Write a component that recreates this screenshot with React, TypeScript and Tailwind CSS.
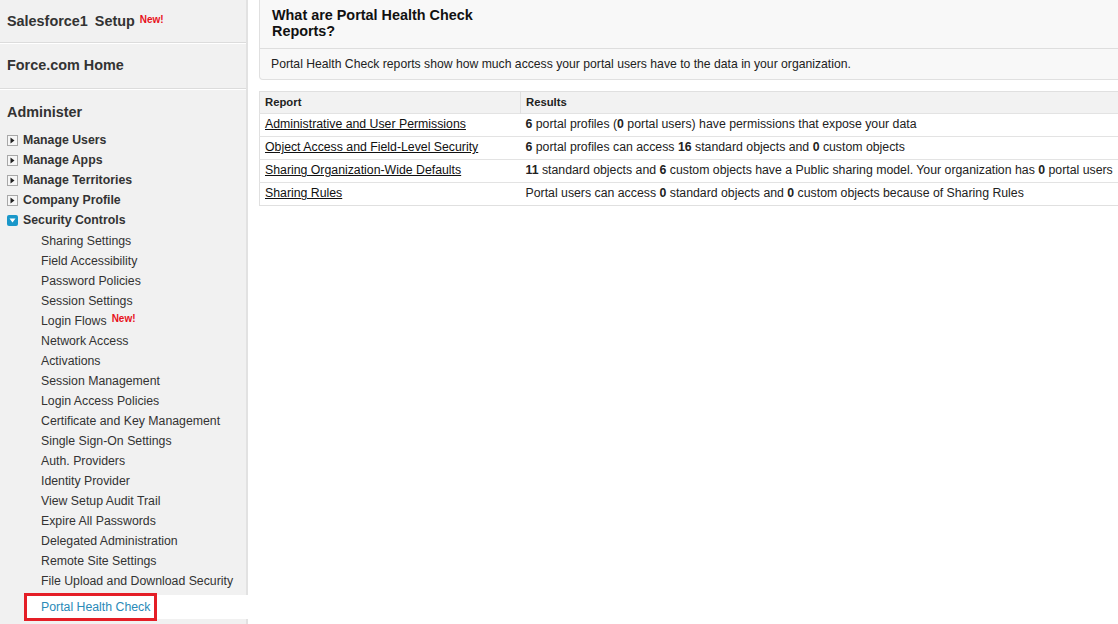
import React from "react";

const font = { fontFamily: '"Liberation Sans", Arial, sans-serif' };

type Node = { label: string; open?: boolean };

const groups: Node[] = [
  { label: "Manage Users" },
  { label: "Manage Apps" },
  { label: "Manage Territories" },
  { label: "Company Profile" },
  { label: "Security Controls", open: true },
];

const securityItems = [
  "Sharing Settings",
  "Field Accessibility",
  "Password Policies",
  "Session Settings",
  "Login Flows",
  "Network Access",
  "Activations",
  "Session Management",
  "Login Access Policies",
  "Certificate and Key Management",
  "Single Sign-On Settings",
  "Auth. Providers",
  "Identity Provider",
  "View Setup Audit Trail",
  "Expire All Passwords",
  "Delegated Administration",
  "Remote Site Settings",
  "File Upload and Download Security",
];

const NewBadge = () => (
  <span className="ml-[5px] text-[10px] font-bold text-[#e8111b] relative -top-[3px]">New!</span>
);

const TreeIcon = ({ open }: { open?: boolean }) =>
  open ? (
    <span className="w-[11px] h-[11px] rounded-[2px] bg-[#1a97c9] flex items-center justify-center">
      <svg width="7" height="5" viewBox="0 0 7 5">
        <path d="M0.5 0.5 L6.5 0.5 L3.5 4.5 Z" fill="#fff" />
      </svg>
    </span>
  ) : (
    <span className="w-[11px] h-[11px] border border-[#a8a8a8] bg-[#f6f6f6] flex items-center justify-center">
      <svg width="5" height="7" viewBox="0 0 5 7">
        <path d="M0.5 0.5 L4.5 3.5 L0.5 6.5 Z" fill="#222" />
      </svg>
    </span>
  );

const Sidebar = () => (
  <div className="w-[248px] shrink-0 bg-[#f1f1f1] border-r-[2px] border-[#e2e2e2] flex flex-col text-[#333]">
    <div className="h-[43px] shrink-0 flex items-center pt-[2px] pl-[7px] border-b border-[#dcdcdc]">
      <span className="text-[14.4px] font-bold">
        Salesforce1<span className="ml-[7px]">Setup</span>
      </span>
      <NewBadge />
    </div>
    <div className="h-[46px] shrink-0 flex items-center pl-[7px] border-b border-[#dcdcdc] border-t border-t-white">
      <span className="text-[14.4px] font-bold">Force.com Home</span>
    </div>
    <div className="shrink-0 border-t border-white pt-[12px] pl-[7px]">
      <div className="text-[14.4px] font-bold h-[20px] leading-[20px]">Administer</div>
      <div className="mt-[8px] flex flex-col">
        {groups.map((g) => (
          <div key={g.label} className="h-[20px] flex items-center gap-[5px]">
            <TreeIcon open={g.open} />
            <span className="text-[12.3px] font-bold">{g.label}</span>
          </div>
        ))}
      </div>
      <div className="flex flex-col pl-[34px] pt-[1px]">
        {securityItems.map((s) => (
          <div key={s} className="h-[20px] flex items-center text-[12.3px] text-[#333]">
            {s}
            {s === "Login Flows" && <NewBadge />}
          </div>
        ))}
      </div>
      <div className="relative mt-[4px] ml-[19px] -mr-[3px] h-[24px] bg-white flex items-center pl-[15px]">
        <span className="text-[12.3px] text-[#2a8ab8]">Portal Health Check</span>
        <div className="absolute -left-[2px] -top-[2px] w-[133px] h-[28px] border-[3px] border-[#e41e26]" />
      </div>
      <div className="h-[20px]" />
    </div>
  </div>
);

const rows: { report: string; result: React.ReactNode }[] = [
  {
    report: "Administrative and User Permissions",
    result: (
      <>
        <b>6</b> portal profiles (<b>0</b> portal users) have permissions that expose your data
      </>
    ),
  },
  {
    report: "Object Access and Field-Level Security",
    result: (
      <>
        <b>6</b> portal profiles can access <b>16</b> standard objects and <b>0</b> custom objects
      </>
    ),
  },
  {
    report: "Sharing Organization-Wide Defaults",
    result: (
      <>
        <b>11</b> standard objects and <b>6</b> custom objects have a Public sharing model. Your organization has <b>0</b> portal users
      </>
    ),
  },
  {
    report: "Sharing Rules",
    result: (
      <>
        Portal users can access <b>0</b> standard objects and <b>0</b> custom objects because of Sharing Rules
      </>
    ),
  },
];

export default function App() {
  return (
    <div className="w-[1118px] h-[624px] overflow-hidden bg-white flex" style={font}>
      <Sidebar />
      <div className="flex-1 pl-[11px] min-w-0">
        <div className="-mr-[4px] bg-[#f8f8f8] border border-[#e0e0e0] rounded-[4px] border-t-0 rounded-t-none">
          <div className="h-[49px] pl-[12px] pt-[7px] border-b border-[#dedede]">
            <h1 className="w-[230px] text-[14.4px] font-bold leading-[16px] text-[#111]">
              What are Portal Health Check Reports?
            </h1>
          </div>
          <div className="h-[30px] pl-[11px] flex items-center text-[12.2px] text-[#222] whitespace-nowrap">
            Portal Health Check reports show how much access your portal users have to the data in your organization.
          </div>
        </div>
        <table className="mt-[11px] w-[870px] border border-[#e0e0e0] border-collapse text-[12.3px] text-[#222]">
          <thead>
            <tr className="h-[22px] bg-[#f2f2f2] text-left">
              <th className="w-[261px] pl-[5px] font-bold text-[11.3px] border-r border-[#e0e0e0]">Report</th>
              <th className="pl-[5px] font-bold text-[11.3px]">Results</th>
            </tr>
          </thead>
          <tbody>
            {rows.map((r) => (
              <tr key={r.report} className="h-[23px] border-t border-[#e3e3e3]">
                <td className="pl-[5px] pb-[1px]">
                  <span className="underline text-[#111]">{r.report}</span>
                </td>
                <td className="pl-[5px] pb-[1px] whitespace-nowrap">{r.result}</td>
              </tr>
            ))}
          </tbody>
        </table>
      </div>
    </div>
  );
}
